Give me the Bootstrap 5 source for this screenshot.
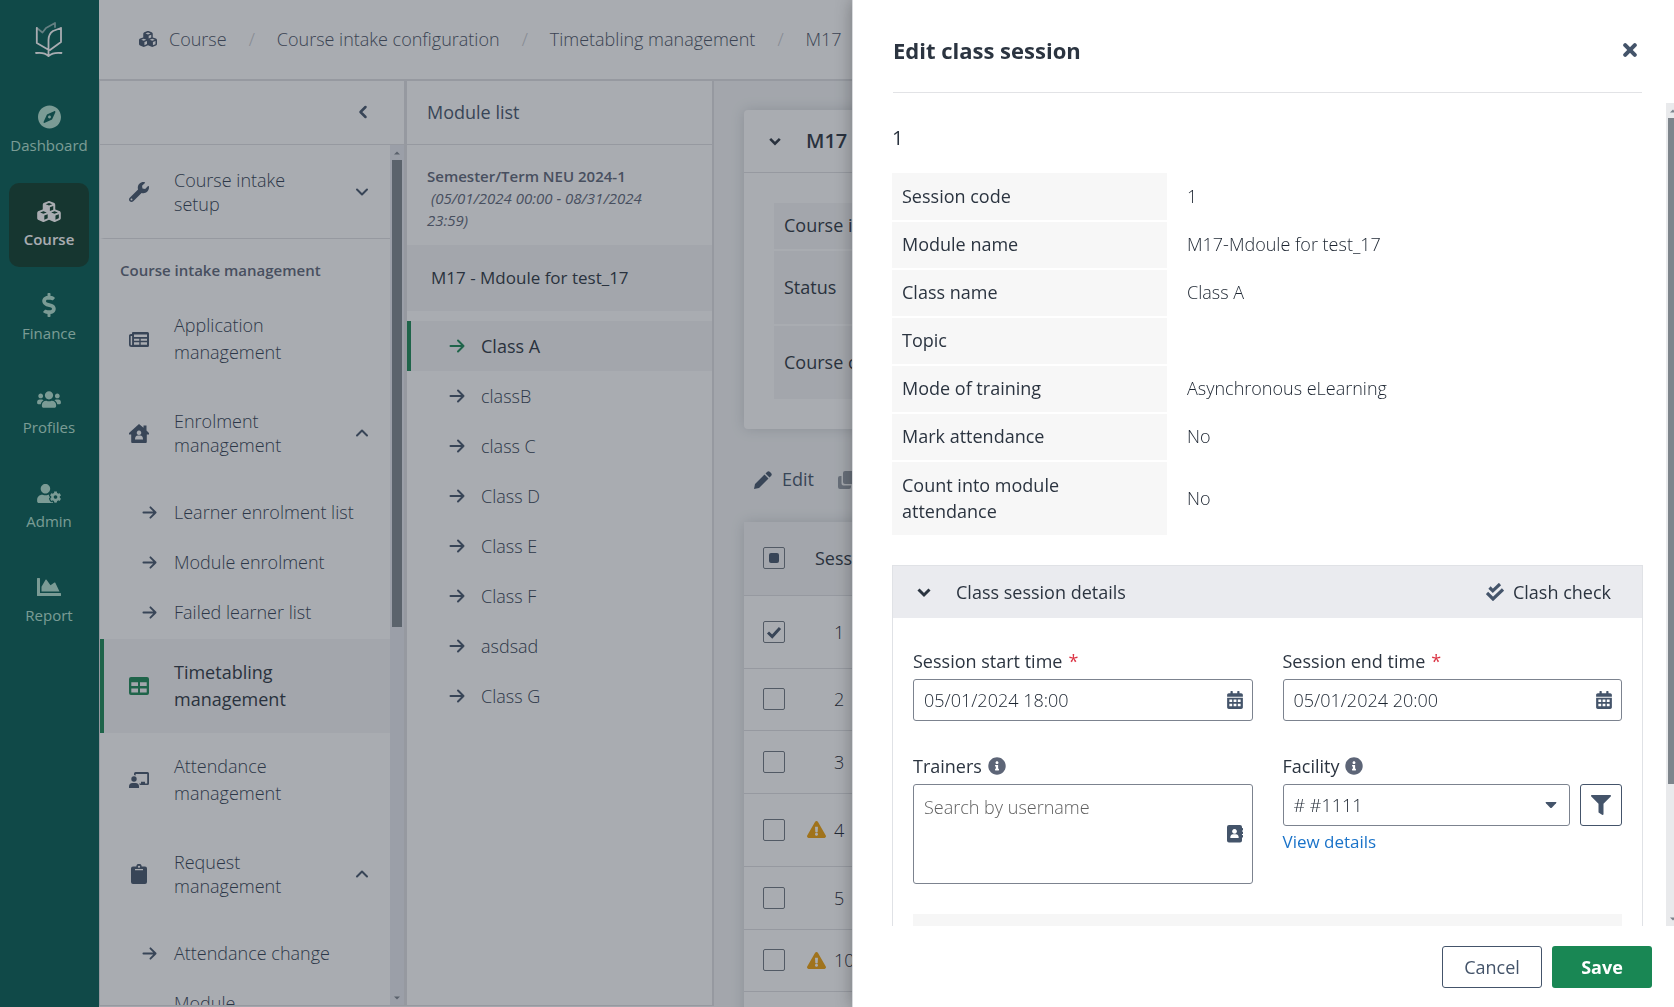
<!doctype html>
<html lang="en">
<head>
<meta charset="utf-8">
<meta name="viewport" content="width=device-width, initial-scale=1">
<title>Timetabling management</title>
<link rel="stylesheet" href="https://cdn.jsdelivr.net/npm/bootstrap@5.3.0/dist/css/bootstrap.min.css">
<style>
:root{--ink:#2b3440;--light-ink:#1b2430;--slate:#44546a;--muted:#5d6577;--line:#dfe0e3;--brand:#198754}
body{font-family:"Open Sans","Noto Sans",sans-serif;font-size:18px;line-height:26px;color:var(--ink);background:#f5f6f7}
a{text-decoration:none;color:inherit}
svg{fill:currentColor;display:block;flex:none}
.stroke-ic{fill:none;stroke:currentColor;stroke-linecap:round;stroke-linejoin:round}
.app{height:100vh;overflow:hidden}

/* main rail */
.rail{width:99px;flex:none;background:#015a50;color:#b2e3d0;font-size:15px;line-height:22px}
.rail-logo{height:89px;padding:20px 2px 0 0;color:#fff}
.rail-link{width:80px;height:84px;margin:0 0 10px 9px;border-radius:10px;padding-top:17px;gap:6px;white-space:nowrap}
.rail-link .ic{height:22px;display:flex;align-items:center}
.rail-link.active{background:#0b3b28;color:#fff;font-weight:600}

/* top bar */
.topbar{height:81px;border-bottom:2px solid var(--line);background:#fff;padding:0 0 2px 40px;color:#495163;font-weight:300;white-space:nowrap}
.topbar .slash{color:#c3c6cc;padding:0 22px}
.pane{background:#fff;overflow:hidden}
.pane-head{height:64px;border-bottom:1px solid var(--line);flex:none;padding-bottom:2px}
.pane-menu{width:308px;flex:none;border-left:1px solid var(--line);border-right:3px solid var(--line);border-bottom:1px solid var(--line)}
.pane-modules{width:307px;flex:none;border-right:2px solid var(--line);border-bottom:1px solid var(--line)}
.collapse-btn{margin-right:35px;color:var(--slate)}
.setup{height:94px;border-bottom:1px solid var(--line);line-height:24px}
.side-item{display:flex;align-items:center;color:#2f3c50;font-weight:300;padding:0 20px 0 25px;border-left:4px solid transparent}
.side-item .ic{width:20px;margin-right:25px;display:flex;justify-content:center;flex:none;color:var(--slate)}
.side-item>svg{color:var(--slate)}
.side-item .txt{flex:1}
.side-block{height:94px;line-height:27px}
.side-block.folds{line-height:24px}
.side-group{padding:7px 0 2px}
.side-sub{height:50px;padding-left:38px}
.side-sub .ic{width:14px;margin-right:18px}
.side-item.active{background:#f6f6f7;border-left-color:var(--brand);color:var(--ink);font-weight:400}
.side-item.active .ic{color:var(--brand)}
.caption{font-size:15px;line-height:22px;font-weight:600;color:var(--muted)}
.menu-caption{padding:20px 0 11px 20px}
.term-caption{padding:20px 56px 14px 20px}
.term-caption em{font-weight:400;margin-left:4px}

/* drawn scroll bars */
.sbar{width:14px;flex:none;background:#e9eaec;color:#7c838c;display:flex;flex-direction:column;align-items:center;justify-content:space-between;padding:6px 0 5px}
.sbar-menu{background:#e8eaf0}
.sbar .thumb{width:10px;background:#7e858c;margin:5px 0 auto}

.module-name{height:66px;background:#f6f6f7;padding-left:24px;font-size:17px}
.class-list{padding-top:10px}
.class-item{padding-left:38px;height:50px}
.class-item .ic{width:16px;margin-right:16px}

/* content */
.content-area{padding:29px 0 0 30px;overflow:hidden;white-space:nowrap}
.sheet{background:#fff;border-radius:4px;box-shadow:0 0 14px rgba(40,48,60,.18)}
.sheet-head{height:63px;border-bottom:1px solid var(--line);padding-left:24px;font-size:20px;font-weight:600}
.sheet-body{padding:28px 30px}
.facts th{background:#f6f6f7;font-weight:400;padding:0 10px 2px;vertical-align:middle}
.facts{border-collapse:separate;border-spacing:0 2px}
.toolbar{height:93px;padding:8px 0 0 10px;color:var(--slate)}
.tool-btn{font-size:18px;gap:10px}
.grid-table{width:100%}
.grid-table thead{background:#f6f6f7}
.grid-table th,.grid-table td{border-bottom:1px solid var(--line);font-weight:300;padding:0}
.grid-table td{color:var(--light-ink)}
.grid-table th{font-weight:400}
.grid-table .tick{width:63px;padding-left:19px}
.tickbox{appearance:none;display:block;width:22px;height:22px;margin:0;border:1px solid #6f7780;border-radius:2px;background:center/16px no-repeat #fff}
.tickbox:checked{background-image:url("data:image/svg+xml,%3Csvg xmlns='http://www.w3.org/2000/svg' viewBox='0 0 16 16'%3E%3Cpath d='M2 8.500l4.200 4L14 4' fill='none' stroke='%2344546a' stroke-width='3'/%3E%3C/svg%3E")}
.tickbox.some{background-image:url("data:image/svg+xml,%3Csvg xmlns='http://www.w3.org/2000/svg' viewBox='0 0 16 16'%3E%3Crect x='3' y='3' width='10' height='10' rx='2' fill='%2344546a'/%3E%3C/svg%3E");background-color:transparent}
.alert-slot{width:20px;margin-right:7px;color:#f0a008}
.h46{height:46px}.h62{height:62px}.h63{height:63px}.h73{height:73px}

/* drawer */
.drawer.offcanvas{--bs-offcanvas-width:822px;color:var(--ink);background:#fff;border-left:1px solid #d8dadd;box-shadow:0 0 16px rgba(0,0,0,.3)}
.shade{background:rgba(40,48,60,.4);z-index:1040}
.drawer-head{margin:0 32px 0 40px;height:93px;border-bottom:1px solid #e2e3e6;flex:none;padding:7px 5px 0 0}
.drawer-title{font-size:22px;font-weight:700;line-height:32px}
.drawer-body{margin-top:10px;overflow:hidden}
.drawer-scroll{padding:20px 23px 0 39px;overflow:hidden}
.drawer-bar{width:8px;flex:none;overflow:hidden}
.session-no{font-size:20px;line-height:30px;margin-bottom:20px}
.details{width:100%;border-collapse:collapse}
.details th,.details td{border-bottom:2px solid #fff;padding:9px 10px 11px;height:48px}
.details tr:last-child>*{height:75px}
.details th{background:#f7f7f7;font-weight:400;width:275px}
.details td{font-weight:300;padding-left:20px;color:var(--light-ink)}
.panel-box{border:1px solid #e0e2e6;margin-top:28px}
.panel-head{height:52px;background:#eaebef;padding:0 31px 0 23px}
.panel-head button{font-size:18px;gap:9px;color:var(--ink)}
.panel-body{padding:30px 20px 0}
.field-label{line-height:26px;margin-bottom:5px;display:flex;align-items:center;gap:6px}
.field-label svg{color:#5d6577}
.star{color:#dc3545}
.drawer .form-control,.drawer .form-select{border:1px solid #7c838f;border-radius:3px;font-size:18px;font-weight:300;line-height:26px;color:var(--light-ink);padding:7px 10px;height:42px}
.drawer textarea.form-control{height:100px;padding:9px 10px;resize:none}
.drawer .form-control::placeholder{color:#5f5f5f}
.drawer .form-select{background-image:url("data:image/svg+xml,%3Csvg xmlns='http://www.w3.org/2000/svg' viewBox='0 0 12 12'%3E%3Cpath d='M1 3h10q1 0 0 1.200L7 8.500q-1 1-2 0L1 4.200Q0 3 1 3z' fill='%2344546a'/%3E%3C/svg%3E");background-size:12px;background-position:right 12px center}
.field-icon{position:absolute;right:10px;top:50%;transform:translateY(-50%);color:var(--slate);padding:0;border:0;background:none}
.btn-square{width:42px;height:42px;border:1px solid var(--slate);border-radius:3px;background:#fff;color:var(--slate);padding:0;display:flex;align-items:center;justify-content:center;flex:none}
.details-link{color:#1a73c9;display:inline-block;font-size:17px;line-height:20px;padding-top:6px}
.next-band{background:#f6f6f6;height:60px;margin-top:30px}
.drawer-foot{height:81px;padding:0 22px;gap:10px;flex:none}
.drawer-foot .btn{width:100px;height:42px;font-size:18px;line-height:26px;border-radius:3px;padding:0}
.btn-plain{border:1px solid var(--slate);color:var(--slate);background:#fff}
.drawer-foot .btn-save{background:var(--brand);color:#fff;font-weight:700}
</style>
<script src="https://cdn.jsdelivr.net/npm/bootstrap@5.3.0/dist/js/bootstrap.bundle.min.js"></script>
</head>
<body>
<svg class="d-none" aria-hidden="true">
<symbol id="cubes" viewBox="0 0 576 512"><path d="M290.800 48.600l78.400 29.700L288 109.500 206.800 78.300l78.400-29.700c1.800-.7 3.800-.7 5.700 0zM136 92.500V204.700c-1.300 .4-2.600 .8-3.900 1.300l-96 36.400C14.400 250.600 0 271.500 0 294.700V413.900c0 22.200 13.100 42.300 33.500 51.300l96 42.200c14.400 6.300 30.700 6.300 45.100 0L288 457.500l113.500 49.900c14.400 6.300 30.700 6.300 45.100 0l96-42.200c20.300-8.900 33.500-29.100 33.500-51.300V294.700c0-23.300-14.400-44.100-36.100-52.400l-96-36.400c-1.300-.5-2.600-.9-3.900-1.300V92.500c0-23.300-14.400-44.100-36.100-52.400l-96-36.400c-12.800-4.800-26.900-4.800-39.700 0l-96 36.400C150.400 48.400 136 69.300 136 92.500zM392 210.600l-82.400 31.200V152.600L392 121v89.600zM154.800 250.900l78.400 29.700L152 311.700 70.800 280.600l78.400-29.700c1.800-.7 3.800-.7 5.700 0zm18.800 204.400V354.800L256 323.200v95.900l-82.400 36.200zM421.200 250.900c1.800-.7 3.800-.7 5.700 0l78.400 29.700L424 311.700l-81.200-31.100 78.400-29.700zM523.200 421.200l-77.600 34.100V354.800L528 323.200v90.700c0 3.200-1.900 6-4.800 7.300z"/></symbol>
<symbol id="arrow" viewBox="0 0 16 16"><path class="stroke-ic" d="M1.500 8h13M9 2.500L14.500 8 9 13.500" stroke-width="2"/></symbol>
<symbol id="down" viewBox="0 0 16 16"><path class="stroke-ic" d="M3 5.500l5 5 5-5" stroke-width="2"/></symbol>
<symbol id="up" viewBox="0 0 16 16"><path class="stroke-ic" d="M3 10.500l5-5 5 5" stroke-width="2"/></symbol>
<symbol id="downbold" viewBox="0 0 16 16"><path class="stroke-ic" d="M2.500 5.500L8 11l5.500-5.500" stroke-width="3" style="stroke-linecap:butt;stroke-linejoin:miter"/></symbol>
<symbol id="warn" viewBox="0 0 576 512"><path d="M569.517 440.013C587.975 472.007 564.806 512 527.940 512H48.054c-36.937 0-59.999-40.055-41.577-71.987L246.423 23.985c18.467-32.009 64.720-31.951 83.154 0l239.940 416.028zM288 354c-25.405 0-46 20.595-46 46s20.595 46 46 46 46-20.595 46-46-20.595-46-46-46zm-43.673-165.346l7.418 136c.347 6.364 5.609 11.346 11.982 11.346h48.546c6.373 0 11.635-4.982 11.982-11.346l7.418-136c.375-6.874-5.098-12.654-11.982-12.654h-63.383c-6.884 0-12.356 5.780-11.981 12.654z"/></symbol>
<symbol id="info" viewBox="0 0 512 512"><path d="M256 8C119.043 8 8 119.083 8 256c0 136.997 111.043 248 248 248s248-111.003 248-248C504 119.083 392.957 8 256 8zm0 110c23.196 0 42 18.804 42 42s-18.804 42-42 42-42-18.804-42-42 18.804-42 42-42zm56 254c0 6.627-5.373 12-12 12h-88c-6.627 0-12-5.373-12-12v-24c0-6.627 5.373-12 12-12h12v-64h-12c-6.627 0-12-5.373-12-12v-24c0-6.627 5.373-12 12-12h64c6.627 0 12 5.373 12 12v100h12c6.627 0 12 5.373 12 12v24z"/></symbol>
<symbol id="cal" viewBox="0 0 448 512"><path fill-rule="evenodd" d="M0 192h448v272c0 26.500-21.500 48-48 48H48c-26.500 0-48-21.500-48-48zM64 240v70h80v-70zM184 240v70h80v-70zM304 240v70h80v-70zM64 366v70h80v-70zM184 366v70h80v-70zM304 366v70h80v-70z"/><path d="M400 64h-48V16c0-8.800-7.200-16-16-16h-32c-8.800 0-16 7.200-16 16v48H160V16c0-8.800-7.200-16-16-16h-32c-8.800 0-16 7.200-16 16v48H48C21.500 64 0 85.500 0 112v48h448v-48c0-26.500-21.500-48-48-48z"/></symbol>
<symbol id="tri-up" viewBox="0 0 6 4"><path d="M3 .5L6 3.500H0z"/></symbol>
<symbol id="tri-down" viewBox="0 0 6 4"><path d="M3 3.500L0 .5h6z"/></symbol>
</svg>

<div class="app d-flex">
  <nav class="rail" aria-label="Main">
    <a href="#" class="rail-logo d-flex justify-content-center" aria-label="Home">
      <svg class="stroke-ic" width="28" height="38" viewBox="0 0 28 38" stroke-width="1.800"><path d="M1.800 8v15L13 29.500M26 8v14l-11 8M13.500 35V20Q13.500 14 18 11l8-3M1 33q8.500-1 12.500 3 4.500-4 13-3"/><path d="M1.800 8l5.700 4.500L11 8l9-5v4" opacity=".55"/></svg></a>
    <a href="#" class="rail-link d-flex flex-column align-items-center"><span class="ic"><svg width="23" height="24" viewBox="0 0 496 512"><path d="M225.380 233.370c-12.500 12.500-12.500 32.760 0 45.250 12.490 12.500 32.760 12.500 45.250 0 12.500-12.500 12.500-32.760 0-45.250-12.500-12.490-32.760-12.490-45.250 0zM248 8C111.030 8 0 119.030 0 256s111.030 248 248 248 248-111.030 248-248S384.970 8 248 8zm126.140 148.050L308.170 300.400a31.938 31.938 0 0 1-15.770 15.770l-144.340 65.970c-16.650 7.610-33.810-9.550-26.200-26.200l65.980-144.350a31.938 31.938 0 0 1 15.770-15.770l144.340-65.970c16.650-7.600 33.800 9.550 26.190 26.200z"/></svg></span>Dashboard</a>
    <a href="#" class="rail-link active d-flex flex-column align-items-center" aria-current="page"><span class="ic"><svg width="24" height="21"><use href="#cubes"/></svg></span>Course</a>
    <a href="#" class="rail-link d-flex flex-column align-items-center"><span class="ic"><svg width="14" height="24" viewBox="0 0 288 512"><path d="M209.200 233.400l-108-31.600C88.700 198.200 80 186.500 80 173.500c0-16.300 13.200-29.500 29.500-29.500h66.300c12.200 0 24.200 3.700 34.200 10.500 6.100 4.100 14.300 3.100 19.500-2l34.800-34c7.100-6.900 6.100-18.400-1.800-24.500C238 74.800 207.400 64.100 176 64V16c0-8.800-7.200-16-16-16h-32c-8.800 0-16 7.200-16 16v48h-2.500C45.800 64-5.400 118.700.5 183.600c4.200 46.100 39.400 83.600 83.800 96.600l102.500 30c12.500 3.700 21.200 15.300 21.200 28.300 0 16.300-13.200 29.500-29.500 29.500h-66.300C100 368 88 364.300 78 357.500c-6.100-4.100-14.300-3.100-19.500 2l-34.800 34c-7.100 6.900-6.100 18.400 1.800 24.500 24.500 19.200 55.100 29.900 86.500 30v48c0 8.800 7.200 16 16 16h32c8.800 0 16-7.200 16-16v-48.200c46.600-.9 90.300-28.600 105.700-72.700 21.500-61.600-14.600-124.800-72.500-141.700z"/></svg></span>Finance</a>
    <a href="#" class="rail-link d-flex flex-column align-items-center"><span class="ic"><svg width="24" height="19" viewBox="0 0 640 512"><path d="M96 224c35.300 0 64-28.700 64-64s-28.700-64-64-64-64 28.700-64 64 28.700 64 64 64zm448 0c35.300 0 64-28.700 64-64s-28.700-64-64-64-64 28.700-64 64 28.700 64 64 64zm32 32h-64c-17.600 0-33.500 7.100-45.100 18.600 40.300 22.100 68.900 62 75.100 109.400h66c17.700 0 32-14.300 32-32v-32c0-35.300-28.700-64-64-64zm-256 0c61.900 0 112-50.100 112-112S381.900 32 320 32 208 82.100 208 144s50.100 112 112 112zm76.800 32h-8.300c-20.800 10-43.900 16-68.500 16s-47.600-6-68.500-16h-8.300C179.600 288 128 339.600 128 403.200V432c0 26.500 21.500 48 48 48h288c26.500 0 48-21.500 48-48v-28.800c0-63.600-51.600-115.200-115.200-115.200zm-223.700-13.400C161.500 263.100 145.600 256 128 256H64c-35.300 0-64 28.700-64 64v32c0 17.700 14.300 32 32 32h65.900c6.300-47.400 34.900-87.300 75.200-109.400z"/></svg></span>Profiles</a>
    <a href="#" class="rail-link d-flex flex-column align-items-center"><span class="ic"><svg width="24" height="19" viewBox="0 0 640 512"><path d="M610.500 373.300c2.600-14.100 2.600-28.500 0-42.600l25.800-14.900c3-1.700 4.300-5.200 3.300-8.500-6.700-21.600-18.200-41.200-33.200-57.400-2.300-2.500-6-3.100-9-1.400l-25.800 14.900c-10.900-9.300-23.400-16.500-36.900-21.300v-29.800c0-3.400-2.400-6.400-5.700-7.100-22.300-5-45-4.800-66.200 0-3.300.7-5.700 3.700-5.700 7.100v29.800c-13.500 4.800-26 12-36.900 21.300l-25.800-14.900c-2.900-1.700-6.700-1.100-9 1.400-15 16.200-26.500 35.800-33.200 57.400-1 3.300.4 6.800 3.300 8.500l25.800 14.900c-2.600 14.100-2.600 28.500 0 42.600l-25.800 14.900c-3 1.700-4.300 5.200-3.300 8.500 6.700 21.600 18.200 41.100 33.200 57.400 2.300 2.500 6 3.100 9 1.400l25.800-14.900c10.900 9.300 23.400 16.500 36.900 21.300v29.800c0 3.400 2.400 6.400 5.700 7.100 22.300 5 45 4.800 66.200 0 3.300-.7 5.700-3.700 5.700-7.100v-29.800c13.500-4.800 26-12 36.900-21.300l25.800 14.900c2.900 1.700 6.700 1.100 9-1.400 15-16.200 26.500-35.800 33.200-57.400 1-3.300-.4-6.800-3.300-8.500l-25.800-14.900zM496 400.500c-26.800 0-48.500-21.800-48.500-48.500s21.800-48.500 48.500-48.500 48.500 21.800 48.500 48.500-21.700 48.500-48.500 48.500zM224 256c70.700 0 128-57.300 128-128S294.700 0 224 0 96 57.300 96 128s57.300 128 128 128zm201.200 226.500c-2.300-1.200-4.600-2.600-6.800-3.900l-7.900 4.600c-6 3.400-12.800 5.300-19.600 5.300-10.900 0-21.400-4.600-28.900-12.600-18.300-19.800-32.300-43.900-40.200-69.600-5.500-17.700 1.900-36.400 17.900-45.700l7.900-4.600c-.1-2.600-.1-5.200 0-7.800l-7.900-4.600c-16-9.200-23.400-28-17.900-45.700.9-2.900 2.200-5.800 3.200-8.700-3.800-.3-7.500-1.200-11.400-1.200h-16.700c-22.200 10.200-46.900 16-72.900 16s-50.600-5.800-72.900-16h-16.700C60.200 288 0 348.200 0 422.400V464c0 26.500 21.500 48 48 48h352c10.100 0 19.500-3.200 27.200-8.500-1.200-3.800-2-7.700-2-11.800v-9.200z"/></svg></span>Admin</a>
    <a href="#" class="rail-link d-flex flex-column align-items-center"><span class="ic"><svg width="24" height="24" viewBox="0 0 512 512"><path d="M500 384c6.600 0 12 5.400 12 12v40c0 6.600-5.400 12-12 12H12c-6.600 0-12-5.400-12-12V76c0-6.600 5.400-12 12-12h40c6.600 0 12 5.400 12 12v308h436zM372.700 159.500L288 216l-85.300-113.700c-5.100-6.800-15.500-6.300-19.900 1L96 248v104h384l-89.900-187.800c-3.200-6.500-11.400-8.700-17.400-4.700z"/></svg></span>Report</a>
  </nav>

  <div class="d-flex flex-column flex-grow-1 overflow-hidden">
    <nav class="topbar d-flex align-items-center flex-shrink-0" aria-label="Breadcrumb">
      <svg class="me-2" width="18" height="16" style="color:#44546a"><use href="#cubes"/></svg>
      <a href="#" class="ms-1">Course</a><span class="slash">/</span><a href="#">Course intake configuration</a><span class="slash">/</span><a href="#">Timetabling management</a><span class="slash">/</span><span>M17</span>
    </nav>

    <div class="d-flex flex-grow-1 overflow-hidden">
      <div class="d-flex flex-shrink-0" style="padding-bottom:1px">
      <aside class="pane pane-menu d-flex flex-column">
        <div class="pane-head d-flex align-items-center justify-content-end"><button class="collapse-btn btn p-0 border-0" aria-label="Collapse menu"><svg class="stroke-ic" width="12" height="16" viewBox="0 0 12 16" stroke-width="2.500"><path d="M8.500 3L3.500 8l5 5"/></svg></button></div>
        <div class="d-flex flex-grow-1 overflow-hidden">
          <div class="flex-grow-1 overflow-hidden">
            <a href="#" class="side-item setup"><span class="ic"><svg width="20" height="20" viewBox="0 0 512 512"><path d="M507.730 109.100c-2.240-9.030-13.540-12.090-20.120-5.510l-74.360 74.360-67.880-11.310-11.310-67.880 74.360-74.360c6.620-6.620 3.430-17.900-5.660-20.160-47.380-11.740-99.550.91-136.580 37.930-39.640 39.640-50.550 97.100-34.050 147.200L18.740 402.760c-24.990 24.990-24.990 65.510 0 90.500 24.990 24.990 65.510 24.990 90.500 0l213.210-213.210c50.120 16.710 107.470 5.680 147.370-34.220 37.070-37.070 49.700-89.320 37.910-136.730zM64 472c-13.250 0-24-10.750-24-24 0-13.260 10.750-24 24-24s24 10.740 24 24c0 13.250-10.750 24-24 24z"/></svg></span><span class="txt">Course intake<br>setup</span><svg width="16" height="16"><use href="#down"/></svg></a>
            <div class="caption menu-caption">Course intake management</div>
            <a href="#" class="side-item side-block"><span class="ic"><svg width="20" height="15" viewBox="0 0 20 15"><path fill-rule="evenodd" d="M4 0h14.500Q20 0 20 1.500v12Q20 15 18.500 15h-16Q0 15 0 12.500V3.500Q0 2 2 2h1V1Q3 0 4 0zM1.700 4v8.500q0 .8.700.8t.700-.8V4zM5 2.500V5h13V2.500zM5 6.700v2h5.300v-2zM11.700 6.700v2H18v-2zM5 10.300V12.800h5.300v-2.500zM11.700 10.300v2.500H18v-2.500z"/></svg></span><span class="txt">Application<br>management</span></a>
            <a href="#" class="side-item side-block folds"><span class="ic"><svg width="20" height="19" viewBox="0 0 20 19"><path fill-rule="evenodd" d="M10 0l4.500 3.800V1.500h3V6.500L20 9v1.500h-2.200V18q0 1-1 1H3.200q-1 0-1-1v-7.500H0V9zM10 6.500a2.300 2.300 0 1 0 .01 0zM6 15.500h8q0-4-3-4H9q-3 0-3 4z"/></svg></span><span class="txt">Enrolment<br>management</span><svg width="16" height="16"><use href="#up"/></svg></a>
            <div class="side-group">
            <a href="#" class="side-item side-sub"><span class="ic"><svg width="15" height="15"><use href="#arrow"/></svg></span><span class="txt">Learner enrolment list</span></a>
            <a href="#" class="side-item side-sub"><span class="ic"><svg width="15" height="15"><use href="#arrow"/></svg></span><span class="txt">Module enrolment</span></a>
            <a href="#" class="side-item side-sub"><span class="ic"><svg width="15" height="15"><use href="#arrow"/></svg></span><span class="txt">Failed learner list</span></a>
            </div>
            <a href="#" class="side-item side-block active" aria-current="page"><span class="ic"><svg width="20" height="18" viewBox="0 0 20 18"><path fill-rule="evenodd" d="M2 0h16q2 0 2 2v14q0 2-2 2H2q-2 0-2-2V2Q0 0 2 0zM2.300 5.300v3.700H9V5.300zM11 5.300v3.700h6.700V5.300zM2.300 11.500v4H9v-4zM11 11.500v4h6.700v-4z"/></svg></span><span class="txt">Timetabling<br>management</span></a>
            <a href="#" class="side-item side-block"><span class="ic"><svg width="20" height="16" viewBox="0 0 20 16"><circle cx="5" cy="7" r="2.700"/><path d="M0 16v-1.500q0-3.500 3.500-3.500h3q3.500 0 3.500 3.500V16zM5 3V1.500Q5 0 6.500 0h12Q20 0 20 1.500v10q0 1.500-1.500 1.500H11q-.5-1-1-1.500h2V9.700h4v1.800h2.200V1.900H6.700V3.500z"/></svg></span><span class="txt">Attendance<br>management</span></a>
            <a href="#" class="side-item side-block folds"><span class="ic"><svg width="16" height="20" viewBox="0 0 16 20"><path fill-rule="evenodd" d="M5.300 2.500a2.700 2.700 0 0 1 5.400 0H14q2 0 2 2V18q0 2-2 2H2q-2 0-2-2V4.500q0-2 2-2zM8 1.700a1 1 0 1 0 .01 0zM4 5v1.200h8V5z"/></svg></span><span class="txt">Request<br>management</span><svg width="16" height="16"><use href="#up"/></svg></a>
            <div class="side-group">
            <a href="#" class="side-item side-sub"><span class="ic"><svg width="15" height="15"><use href="#arrow"/></svg></span><span class="txt">Attendance change</span></a>
            <a href="#" class="side-item side-sub"><span class="ic"></span><span class="txt">Module</span></a>
            </div>
          </div>
          <div class="sbar sbar-menu" aria-hidden="true"><svg width="6" height="4"><use href="#tri-up"/></svg><div class="thumb" style="height:55%"></div><svg width="6" height="4"><use href="#tri-down"/></svg></div>
        </div>
      </aside>

      <section class="pane pane-modules">
        <div class="pane-head d-flex align-items-center" style="color:#44546a"><span class="ps-1 ms-3">Module list</span></div>
        <div class="caption term-caption">Semester/Term NEU 2024-1<br><em>(05/01/2024 00:00 - 08/31/2024 23:59)</em></div>
        <div class="module-name d-flex align-items-center">M17 - Mdoule for test_17</div>
        <div class="class-list">
        <a href="#" class="side-item class-item active" aria-current="true"><span class="ic"><svg width="16" height="16"><use href="#arrow"/></svg></span>Class A</a>
        <a href="#" class="side-item class-item"><span class="ic"><svg width="16" height="16"><use href="#arrow"/></svg></span>classB</a>
        <a href="#" class="side-item class-item"><span class="ic"><svg width="16" height="16"><use href="#arrow"/></svg></span>class C</a>
        <a href="#" class="side-item class-item"><span class="ic"><svg width="16" height="16"><use href="#arrow"/></svg></span>Class D</a>
        <a href="#" class="side-item class-item"><span class="ic"><svg width="16" height="16"><use href="#arrow"/></svg></span>Class E</a>
        <a href="#" class="side-item class-item"><span class="ic"><svg width="16" height="16"><use href="#arrow"/></svg></span>Class F</a>
        <a href="#" class="side-item class-item"><span class="ic"><svg width="16" height="16"><use href="#arrow"/></svg></span>asdsad</a>
        <a href="#" class="side-item class-item"><span class="ic"><svg width="16" height="16"><use href="#arrow"/></svg></span>Class G</a>
        </div>
      </section>
      </div>

      <main class="content-area flex-grow-1">
        <div class="sheet">
          <div class="sheet-head d-flex align-items-center"><svg width="14" height="14" class="me-3"><use href="#downbold"/></svg><span class="ps-2">M17</span></div>
          <div class="sheet-body">
            <table class="facts w-100">
              <tr class="h46"><th>Course intake</th></tr>
              <tr class="h73"><th>Status</th></tr>
              <tr class="h73"><th>Course code</th></tr>
            </table>
          </div>
        </div>
        <div class="toolbar d-flex align-items-center">
          <button class="tool-btn btn p-0 border-0 d-flex align-items-center" style="color:inherit"><svg width="18" height="18" viewBox="0 0 18 18"><path d="M0 18l1-5L10.500 3.500l4 4L5 17zM11.500 2.500L13 1q1.500-1.500 3 0l1 1q1.500 1.500 0 3l-1.500 1.500z"/></svg>Edit</button>
          <button class="btn p-0 border-0 ms-4" aria-label="Duplicate" style="color:#9299a2"><svg width="18" height="18" viewBox="0 0 18 18"><rect x="5" width="13" height="13" rx="2"/><path d="M3.500 5H2Q0 5 0 7v9q0 2 2 2h9q2 0 2-2v-1.500H5.500q-2 0-2-2z"/></svg></button>
        </div>
        <div class="sheet">
          <table class="grid-table">
            <thead><tr class="h73"><th class="tick"><input type="checkbox" class="tickbox some" aria-label="Select all"></th><th><span class="ps-2">Session</span></th></tr></thead>
            <tbody>
              <tr class="h73"><td class="tick"><input type="checkbox" class="tickbox" aria-label="Session 1" checked></td><td><div class="d-flex"><span class="alert-slot"></span>1</div></td></tr>
              <tr class="h62"><td class="tick"><input type="checkbox" class="tickbox" aria-label="Session 2"></td><td><div class="d-flex"><span class="alert-slot"></span>2</div></td></tr>
              <tr class="h63"><td class="tick"><input type="checkbox" class="tickbox" aria-label="Session 3"></td><td><div class="d-flex"><span class="alert-slot"></span>3</div></td></tr>
              <tr class="h73"><td class="tick"><input type="checkbox" class="tickbox" aria-label="Session 4"></td><td><div class="d-flex align-items-center"><span class="alert-slot"><svg width="19" height="17"><use href="#warn"/></svg></span>4</div></td></tr>
              <tr class="h63"><td class="tick"><input type="checkbox" class="tickbox" aria-label="Session 5"></td><td><div class="d-flex"><span class="alert-slot"></span>5</div></td></tr>
              <tr class="h62"><td class="tick"><input type="checkbox" class="tickbox" aria-label="Session 10"></td><td><div class="d-flex align-items-center"><span class="alert-slot"><svg width="19" height="17"><use href="#warn"/></svg></span>10</div></td></tr>
              <tr class="h62"><td></td><td></td></tr>
            </tbody>
          </table>
        </div>
      </main>
    </div>
  </div>
</div>

<div class="shade position-fixed top-0 start-0 w-100 h-100"></div>

<section class="drawer offcanvas offcanvas-end show" tabindex="-1" data-bs-backdrop="false" data-bs-scroll="true" aria-labelledby="drawerTitle">
  <header class="drawer-head d-flex align-items-center justify-content-between">
    <h1 class="drawer-title m-0" id="drawerTitle">Edit class session</h1>
    <button class="btn p-0 border-0" aria-label="Close" style="color:#44546a"><svg class="stroke-ic" width="14" height="14" viewBox="0 0 14 14" stroke-width="4"><path d="M2.200 2.200l9.600 9.600M11.800 2.200l-9.600 9.600"/></svg></button>
  </header>
  <div class="drawer-body d-flex flex-grow-1">
    <div class="drawer-scroll flex-grow-1">
      <div class="session-no">1</div>
      <table class="details">
        <tr><th scope="row">Session code</th><td>1</td></tr>
        <tr><th scope="row">Module name</th><td>M17-Mdoule for test_17</td></tr>
        <tr><th scope="row">Class name</th><td>Class A</td></tr>
        <tr><th scope="row">Topic</th><td></td></tr>
        <tr><th scope="row">Mode of training</th><td>Asynchronous eLearning</td></tr>
        <tr><th scope="row">Mark attendance</th><td>No</td></tr>
        <tr><th scope="row">Count into module<br>attendance</th><td>No</td></tr>
      </table>
      <div class="panel-box">
        <div class="panel-head d-flex align-items-center">
          <svg width="16" height="16"><use href="#downbold"/></svg><span class="ms-4">Class session details</span>
          <button class="btn p-0 border-0 ms-auto d-flex align-items-center"><svg style="color:#44546a" width="18" height="18" viewBox="0 0 18 18"><path d="M3.500 4.500l3.300 3.300L14 1M1 10l6 6L17 6.500" stroke="currentColor" stroke-width="3.200" fill="none"/></svg>Clash check</button>
        </div>
        <div class="panel-body">
          <div class="row" style="--bs-gutter-x:30px">
            <div class="col-6">
              <label class="field-label" for="start">Session start time <span class="star">*</span></label>
              <div class="position-relative"><input id="start" class="form-control" value="05/01/2024 18:00"><button class="field-icon" aria-label="Pick start"><svg width="16" height="18"><use href="#cal"/></svg></button></div>
            </div>
            <div class="col-6">
              <label class="field-label" for="end">Session end time <span class="star">*</span></label>
              <div class="position-relative"><input id="end" class="form-control" value="05/01/2024 20:00"><button class="field-icon" aria-label="Pick end"><svg width="16" height="18"><use href="#cal"/></svg></button></div>
            </div>
            <div class="col-6 pt-4 mt-2">
              <label class="field-label" for="trainers">Trainers <svg width="18" height="18"><use href="#info"/></svg></label>
              <div class="position-relative"><textarea id="trainers" class="form-control" placeholder="Search by username"></textarea><button class="field-icon" aria-label="Browse trainers"><svg width="16" height="18" viewBox="0 0 16 18"><path fill-rule="evenodd" d="M2 0h11q2 0 2 2v1h.500q.5 0 .5.500v1.500q0 .5-.5.500H15v1h.500q.5 0 .5.500v1.500q0 .5-.5.500H15v1h.500q.5 0 .5.500v1.500q0 .5-.5.500H15v3q0 2-2 2H2q-2 0-2-2V2Q0 0 2 0zM7.500 4a2.400 2.400 0 1 0 .01 0zM3.300 13h8.400q0-3.700-2.700-3.700H6Q3.300 9.300 3.300 13z"/></svg></button></div>
            </div>
            <div class="col-6 pt-4 mt-2">
              <label class="field-label" for="facility">Facility <svg width="18" height="18"><use href="#info"/></svg></label>
              <div class="d-flex" style="gap:10px"><select id="facility" class="form-select"><option># #1111</option></select><button class="btn-square" aria-label="Filter"><svg width="20" height="20" viewBox="0 0 512 512"><path d="M487.976 0H24.028C2.710 0-8.047 25.866 7.058 40.971L192 225.941V432c0 7.831 3.821 15.170 10.237 19.662l80 55.980C298.020 518.690 320 507.493 320 487.980V225.941l184.947-184.970C520.021 25.896 509.338 0 487.976 0z"/></svg></button></div>
              <a href="#" class="details-link">View details</a>
            </div>
          </div>
          <div class="next-band"></div>
        </div>
      </div>
    </div>
    <div class="drawer-bar"><div class="sbar h-100" aria-hidden="true"><svg width="6" height="4"><use href="#tri-up"/></svg><div class="thumb" style="height:82%"></div><svg width="6" height="4"><use href="#tri-down"/></svg></div></div>
  </div>
  <footer class="drawer-foot d-flex align-items-center justify-content-end">
    <button class="btn btn-plain">Cancel</button>
    <button class="btn btn-save">Save</button>
  </footer>
</section>
</body>
</html>
